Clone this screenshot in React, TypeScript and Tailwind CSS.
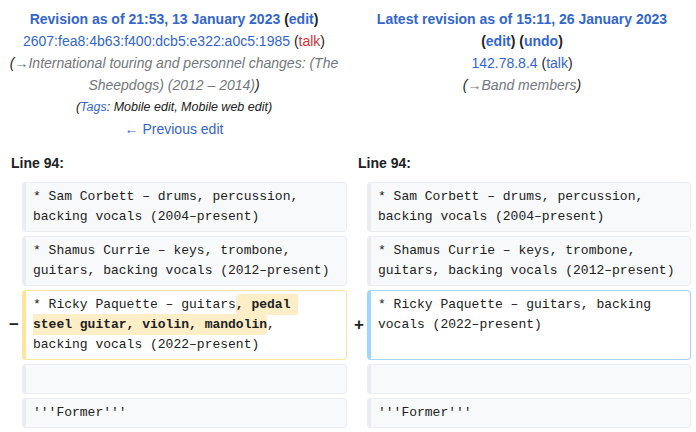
import React from "react";

const blue = "text-[#3366cc]";

function Box({
  kind = "context",
  children,
}: {
  kind?: "context" | "del" | "add";
  children?: React.ReactNode;
}) {
  const color =
    kind === "context"
      ? "border-[#eaecf0] bg-[#f8f9fa]"
      : kind === "del"
      ? "border-[#ffe49c] bg-white"
      : "border-[#a3d3ff] bg-white";
  return (
    <div
      className={`rounded-[4px] border border-l-4 ${color} pl-[7px] pr-[12px] py-[4px] font-['Liberation_Mono',monospace] text-[13px] leading-[20px] text-[#202122] whitespace-pre-wrap break-words min-h-[30px]`}
    >
      {children}
    </div>
  );
}

function Marker({ sign }: { sign?: string }) {
  return (
    <div className="flex items-center justify-end pr-[3px] font-['Liberation_Sans',sans-serif] text-[17px] font-bold text-[#202122]">
      {sign}
    </div>
  );
}

export default function App() {
  return (
    <div className="w-[696px] h-[432px] overflow-hidden bg-white font-['Liberation_Sans',Arial,sans-serif] text-[#202122]">
      <div className="flex items-start">
        <div className="w-1/2 px-[8px] pt-[8px] text-center text-[14px] leading-[22px]">
          <div className="font-bold">
            <span className={blue}>Revision as of 21:53, 13 January 2023</span>{" "}
            (<span className={blue}>edit</span>)
          </div>
          <div>
            <span className={blue}>2607:fea8:4b63:f400:dcb5:e322:a0c5:1985</span>{" "}
            (<span className="text-[#d33333]">talk</span>)
          </div>
          <div className="italic text-[#72777d]">
            <span className="text-[#202122]">(</span>→International touring and personnel
            changes: (The Sheepdogs) (2012 – 2014)<span className="text-[#202122]">)</span>
          </div>
          <div className="italic text-[12.5px]">
            (<span className={blue}>Tags</span>: Mobile edit, Mobile web edit)
          </div>
          <div>
            <span className={blue}>← Previous edit</span>
          </div>
        </div>
        <div className="w-1/2 px-[8px] pt-[8px] text-center text-[14px] leading-[22px]">
          <div className="font-bold">
            <span className={blue}>Latest revision as of 15:11, 26 January 2023</span>
          </div>
          <div className="font-bold">
            (<span className={blue}>edit</span>) (<span className={blue}>undo</span>)
          </div>
          <div>
            <span className={blue}>142.78.8.4</span> (<span className={blue}>talk</span>)
          </div>
          <div className="italic text-[#72777d]">
            <span className="text-[#202122]">(</span>→Band members
            <span className="text-[#202122]">)</span>
          </div>
        </div>
      </div>

      <div className="mt-[12px] grid grid-cols-[22px_325px_20px_324px] gap-y-[4px]">
        <div className="col-span-2 pl-[11px] pb-[4px] text-[14px] leading-[22px] font-bold">
          Line 94:
        </div>
        <div className="col-span-2 pl-[11px] pb-[4px] text-[14px] leading-[22px] font-bold">
          Line 94:
        </div>

        <Marker />
        <Box>* Sam Corbett – drums, percussion, backing vocals (2004–present)</Box>
        <Marker />
        <Box>* Sam Corbett – drums, percussion, backing vocals (2004–present)</Box>

        <Marker />
        <Box>* Shamus Currie – keys, trombone, guitars, backing vocals (2012–present)</Box>
        <Marker />
        <Box>* Shamus Currie – keys, trombone, guitars, backing vocals (2012–present)</Box>

        <Marker sign="−" />
        <Box kind="del">
          * Ricky Paquette – guitars
          <span className="rounded-[4px] bg-[#feeec8] py-[3px] font-bold">
            , pedal steel guitar, violin, mandolin
          </span>
          , backing vocals (2022–present)
        </Box>
        <Marker sign="+" />
        <Box kind="add">* Ricky Paquette – guitars, backing vocals (2022–present)</Box>

        <Marker />
        <Box>{""}</Box>
        <Marker />
        <Box>{""}</Box>

        <Marker />
        <Box>'''Former'''</Box>
        <Marker />
        <Box>'''Former'''</Box>
      </div>
    </div>
  );
}
